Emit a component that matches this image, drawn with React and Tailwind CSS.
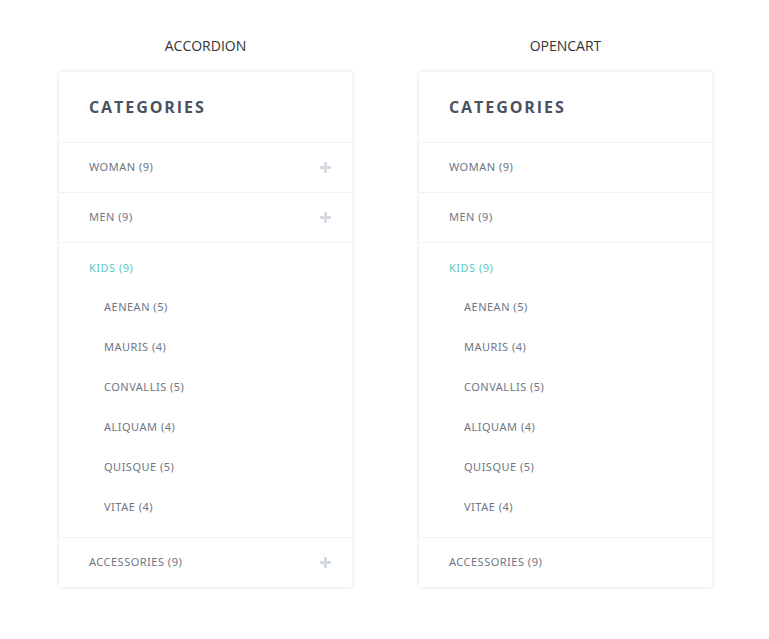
import React from 'react'

const subs = ['AENEAN (5)', 'MAURIS (4)', 'CONVALLIS (5)', 'ALIQUAM (4)', 'QUISQUE (5)', 'VITAE (4)']

function Plus() {
  return (
    <svg width="11" height="11" viewBox="0 0 11 11" className="shrink-0">
      <rect x="4" y="0" width="3" height="11" fill="#d5d9e1" />
      <rect x="0" y="4" width="11" height="3" fill="#d5d9e1" />
    </svg>
  )
}

function Row({ label, plus }) {
  return (
    <div className="h-[50px] flex items-center justify-between pl-[30px] pr-[21px] border-t border-[#f0f1f3]">
      <span className="text-[11px] tracking-[0.5px] text-[#6e7584]">{label}</span>
      {plus && <Plus />}
    </div>
  )
}

function Panel({ title, plus }) {
  return (
    <div className="w-[293px]">
      <h2 className="text-center text-[14px] text-[#333] leading-none h-[26px] mt-[39px] font-['Open_Sans',sans-serif]">{title}</h2>
      <div className="bg-white shadow-[0_0_4px_rgba(0,0,0,0.12)] mt-[7px]">
        <div className="h-[70px] flex items-center pl-[30px]">
          <span className="text-[16px] font-bold tracking-[0.12em] text-[#4a5160] font-['Open_Sans',sans-serif]">CATEGORIES</span>
        </div>
        <Row label="WOMAN (9)" plus={plus} />
        <Row label="MEN (9)" plus={plus} />
        <div className="border-t border-[#f0f1f3] pt-[1px] pb-[10px]">
          <div className="h-[49px] flex items-center pl-[30px]">
            <span className="text-[11px] tracking-[0.5px] text-[#5cc9c1]">KIDS (9)</span>
          </div>
          <div className="-mt-[6px] flex flex-col">
            {subs.map(s => (
              <div key={s} className="h-[40px] flex items-center pl-[45px]">
                <span className="text-[11px] tracking-[0.5px] text-[#6e7584]">{s}</span>
              </div>
            ))}
          </div>
        </div>
        <Row label="ACCESSORIES (9)" plus={plus} />
      </div>
    </div>
  )
}

export default function App() {
  return (
    <div className="w-[769px] h-[639px] bg-white font-['Noto_Sans',sans-serif] flex gap-[67px] pl-[59px]">
      <Panel title="ACCORDION" plus />
      <Panel title="OPENCART" />
    </div>
  )
}
